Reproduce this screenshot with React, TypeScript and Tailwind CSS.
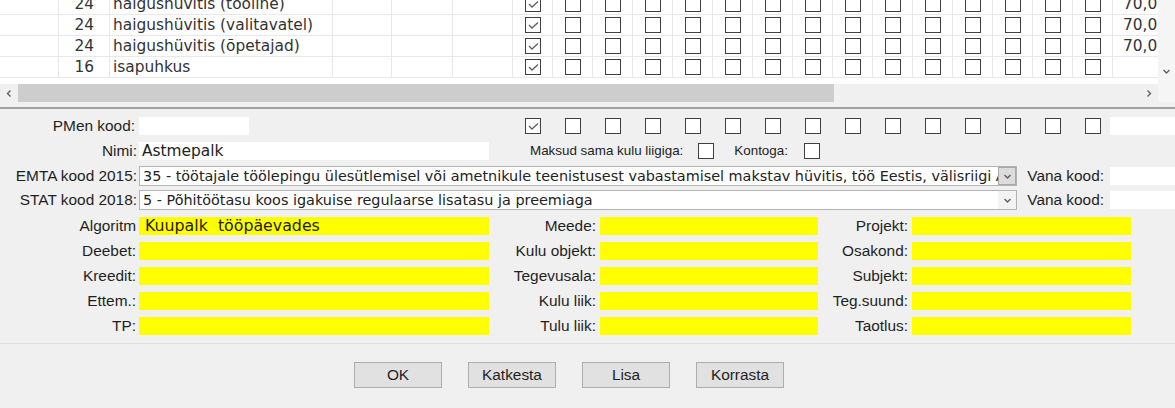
import React from "react";

const dv = "font-['DejaVu_Sans',Verdana,sans-serif]";

const rows = [
  { n: "24", name: "haigushüvitis (tööline)", v: "70,0" },
  { n: "24", name: "haigushüvitis (valitavatel)", v: "70,0" },
  { n: "24", name: "haigushüvitis (õpetajad)", v: "70,0" },
  { n: "16", name: "isapuhkus", v: "" },
];

const fields = [
  ["Algoritm", "Meede:", "Projekt:"],
  ["Deebet:", "Kulu objekt:", "Osakond:"],
  ["Kreedit:", "Tegevusala:", "Subjekt:"],
  ["Ettem.:", "Kulu liik:", "Teg.suund:"],
  ["TP:", "Tulu liik:", "Taotlus:"],
];

function Box({ checked = false }: { checked?: boolean }) {
  return (
    <span className="flex h-[16px] w-[16px] shrink-0 items-center justify-center border-[1.5px] border-[#3f3f3f] bg-white">
      {checked && (
        <svg width="13" height="13" viewBox="0 0 13 13">
          <path d="M2 6 L5 9 L11 3.4" fill="none" stroke="#5f5f5f" strokeWidth="1.3" />
        </svg>
      )}
    </span>
  );
}

function Chevron({ dir }: { dir: "left" | "right" | "down" }) {
  const d =
    dir === "left" ? "M5.5 1.5 L2.5 4.5 L5.5 7.5" : dir === "right" ? "M2.5 1.5 L5.5 4.5 L2.5 7.5" : "M1.5 3 L4.5 6 L7.5 3";
  return (
    <svg width="9" height="9" viewBox="0 0 9 9">
      <path d={d} fill="none" stroke="#606060" strokeWidth="1.4" />
    </svg>
  );
}

function Label({ w, children }: { w: string; children: React.ReactNode }) {
  return <span className={`${w} shrink-0 whitespace-nowrap text-right text-[15.4px] leading-[18px] text-[#1f1f1f]`}>{children}</span>;
}

function Select({ text, active }: { text: string; active?: boolean }) {
  return (
    <div className="ml-[2px] flex h-[20px] w-[878px] border border-[#b4b4b4] bg-white">
      <span className={`${dv} min-w-0 flex-1 overflow-hidden whitespace-nowrap pl-[3px] text-[14.4px] leading-[18px] text-[#222]`}>
        {text}
      </span>
      <span
        className={`flex w-[18px] shrink-0 items-center justify-center ${
          active ? "border border-[#a8a8a8] bg-[#dcdcdc]" : "bg-[#f3f3f3]"
        }`}
      >
        <Chevron dir="down" />
      </span>
    </div>
  );
}

export default function App() {
  return (
    <div className="h-[408px] w-[1175px] overflow-hidden bg-[#f0f0f0] font-['Liberation_Sans',Arial,sans-serif]">
      {/* Grid */}
      <div className="flex">
        <div className="w-[1158px]">
          <div className="h-[84px] overflow-hidden bg-white">
            <div className="mt-[-6px]">
              {rows.map((r, i) => (
                <div key={i} className={`${dv} flex h-[21px] border-b border-[#e8e8e8] text-[15.4px] leading-[20px] text-[#333]`}>
                  <div className="w-[59px] border-r border-[#e8e8e8]" />
                  <div className="w-[51px] border-r border-[#e8e8e8] pr-[15px] text-right">{r.n}</div>
                  <div className="w-[223px] border-r border-[#e8e8e8] pl-[3px] whitespace-nowrap">{r.name}</div>
                  <div className="w-[59px] border-r border-[#e8e8e8]" />
                  <div className="w-[61px] border-r border-[#e8e8e8]" />
                  <div className="w-[60px] border-r border-[#e8e8e8]" />
                  {Array.from({ length: 15 }).map((_, k) => (
                    <div key={k} className="flex w-[40px] items-center border-r border-[#e8e8e8] pl-[12px]">
                      <Box checked={k === 0} />
                    </div>
                  ))}
                  <div className="flex-1 pl-[10px]">{r.v}</div>
                </div>
              ))}
            </div>
          </div>
          <div className="flex h-[18px] bg-[#f0f0f0]">
            <span className="flex w-[18px] items-center justify-center">
              <Chevron dir="left" />
            </span>
            <span className="w-[816px] bg-[#cdcdcd]" />
            <span className="flex-1" />
            <span className="flex w-[17px] items-center justify-center">
              <Chevron dir="right" />
            </span>
          </div>
        </div>
        <div className="flex h-[102px] w-[17px] flex-col bg-[#f5f5f5]">
          <div className="flex h-[80px] flex-col justify-end">
            <span className="flex h-[17px] items-center justify-center">
              <Chevron dir="down" />
            </span>
          </div>
        </div>
      </div>
      <div className="h-[5px]" />
      <div className="border-t-2 border-[#9f9f9f]" />

      {/* Form */}
      <div className="pt-[8px]">
        <div className="flex h-[18px] items-center">
          <Label w="w-[135px]">PMen kood:</Label>
          <span className="ml-[4px] h-[18px] w-[110px] bg-white" />
          <div className="ml-[276px] flex gap-[24px]">
            {Array.from({ length: 15 }).map((_, k) => (
              <Box key={k} checked={k === 0} />
            ))}
          </div>
          <span className="ml-[9px] h-[18px] flex-1 bg-white" />
        </div>

        <div className="mt-[7px] flex h-[18px] items-center">
          <Label w="w-[137px]">Nimi:</Label>
          <span className={`${dv} ml-[2px] h-[18px] w-[350px] bg-white pl-[3px] text-[15.4px] leading-[18px] text-[#222]`}>
            Astmepalk
          </span>
          <span className="ml-[41px] text-[13.4px] leading-[18px] text-[#222]">Maksud sama kulu liigiga:</span>
          <span className="ml-[15px]">
            <Box />
          </span>
          <span className="ml-[20px] text-[13.4px] leading-[18px] text-[#222]">Kontoga:</span>
          <span className="ml-[16px]">
            <Box />
          </span>
        </div>

        <div className="mt-[6px] flex h-[20px] items-center">
          <Label w="w-[137px]">EMTA kood 2015:</Label>
          <Select
            active
            text="35 - töötajale töölepingu ülesütlemisel või ametnikule teenistusest vabastamisel makstav hüvitis, töö Eestis, välisriigi A"
          />
          <Label w="w-[87px]">Vana kood:</Label>
          <span className="ml-[6px] h-[18px] flex-1 bg-white" />
        </div>

        <div className="mt-[4px] flex h-[20px] items-center">
          <Label w="w-[137px]">STAT kood 2018:</Label>
          <Select text="5 - Põhitöötasu koos igakuise regulaarse lisatasu ja preemiaga" />
          <Label w="w-[87px]">Vana kood:</Label>
          <span className="ml-[6px] h-[18px] flex-1 bg-white" />
        </div>

        {fields.map((f, i) => (
          <div key={i} className="mt-[7px] flex h-[18px] items-center">
            <Label w="w-[136px]">{f[0]}</Label>
            <span
              className={`${dv} ml-[3px] h-[18px] w-[350px] whitespace-pre bg-[#ffff00] pl-[6px] text-[15.8px] leading-[18px] text-[#1c1c00]`}
            >
              {i === 0 ? "Kuupalk  tööpäevades" : ""}
            </span>
            <Label w="w-[107px]">{f[1]}</Label>
            <span className="ml-[4px] h-[18px] w-[218px] bg-[#ffff00]" />
            <Label w="w-[90px]">{f[2]}</Label>
            <span className="ml-[4px] h-[18px] w-[219px] bg-[#ffff00]" />
          </div>
        ))}
      </div>

      {/* Buttons */}
      <div className="mt-[8px] border-t border-[#dedede]">
        <div className="flex gap-[26px] pl-[354px] pt-[18px]">
          {["OK", "Katkesta", "Lisa", "Korrasta"].map((b) => (
            <button
              key={b}
              className="h-[26px] w-[88px] border border-[#adadad] bg-[#e1e1e1] text-[15.4px] text-[#1f1f1f]"
            >
              {b}
            </button>
          ))}
        </div>
      </div>
    </div>
  );
}
